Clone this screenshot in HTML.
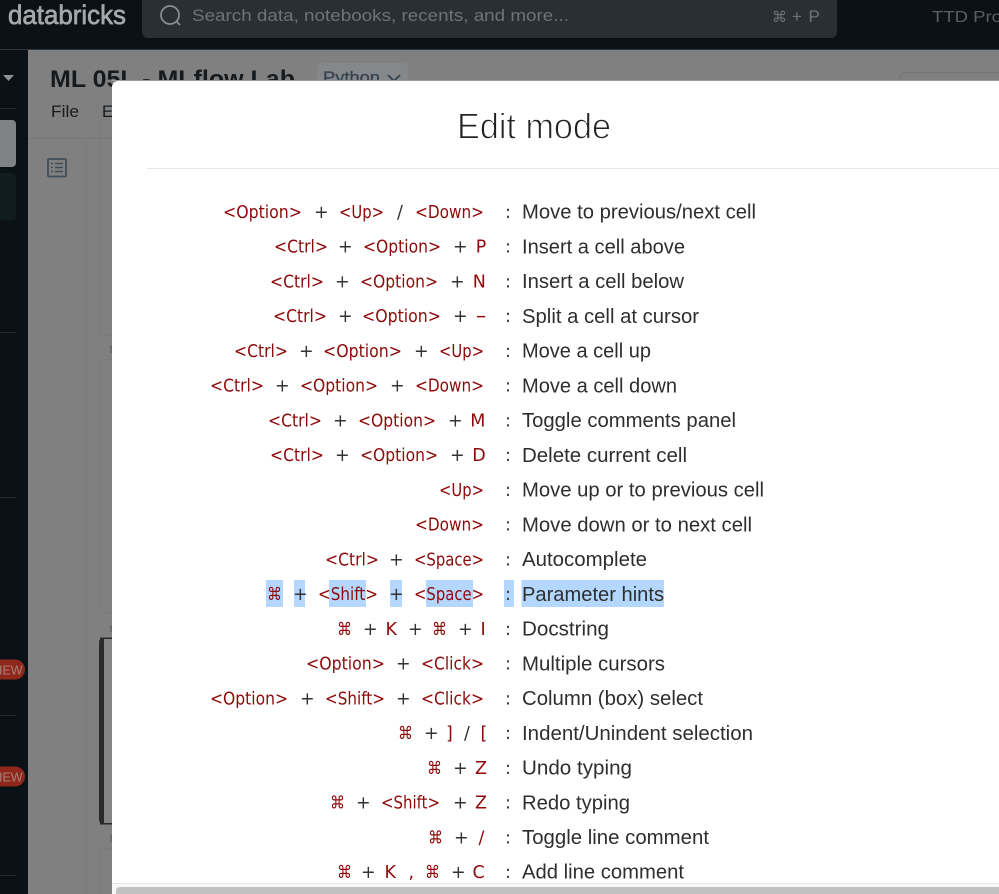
<!DOCTYPE html>
<html><head><meta charset="utf-8"><style>
html,body{margin:0;padding:0;width:999px;height:894px;overflow:hidden;background:#808080}
svg{display:block;position:absolute;left:0;top:0;filter:blur(.35px)}
text{white-space:pre}
.k{font:17.5px "DejaVu Sans",sans-serif;fill:#8e0a0a}
.p{font:17.5px "DejaVu Sans",sans-serif;fill:#333}
.d{font:20px "Liberation Sans",sans-serif;fill:#2e2e2e}
.ds{transform:translateY(.7px)}
</style></head><body>
<svg width="999" height="894" viewBox="0 0 999 894" xmlns="http://www.w3.org/2000/svg">
<!-- page -->
<rect width="999" height="894" fill="#808080"/>
<rect x="0" y="0" width="999" height="50" fill="#0a1217"/>
<rect x="0" y="49" width="999" height="1" fill="#30363a"/>
<rect x="0" y="50" width="28" height="844" fill="#0a1217"/>
<text x="8" y="24" textLength="118" lengthAdjust="spacingAndGlyphs" style="font:400 27px 'Liberation Sans',sans-serif;fill:#a5a7a8;stroke:#a5a7a8;stroke-width:.7px">databricks</text>
<path d="M142 0H837V32a6 6 0 0 1-6 6H148a6 6 0 0 1-6-6Z" fill="#2a2f33"/>
<circle cx="170" cy="15" r="9" fill="none" stroke="#8c8f91" stroke-width="1.7"/>
<path d="M176.500 21.500L180 25" stroke="#8c8f91" stroke-width="1.7"/>
<text x="192" y="21" textLength="377" lengthAdjust="spacingAndGlyphs" style="font:16.500px 'Liberation Sans',sans-serif;fill:#6f7375">Search data, notebooks, recents, and more...</text>
<text x="772" y="22" style="font:15px 'DejaVu Sans',sans-serif;fill:#6f7375">⌘</text>
<text x="792" y="22" style="font:17px 'Liberation Sans',sans-serif;fill:#6f7375">+</text>
<text x="808.500" y="22" style="font:17px 'Liberation Sans',sans-serif;fill:#6f7375">P</text>
<text x="932" y="22" textLength="70" lengthAdjust="spacingAndGlyphs" style="font:16px 'Liberation Sans',sans-serif;fill:#5a5e60">TTD Pro</text>
<!-- sidebar -->
<path d="M3 75H14L8.500 81Z" fill="#8f9193"/>
<rect x="0" y="108" width="16" height="1" fill="#22292d"/>
<path d="M0 120H12a4 4 0 0 1 4 4V163a4 4 0 0 1-4 4H0Z" fill="#808283"/>
<path d="M0 173H12a4 4 0 0 1 4 4V216a4 4 0 0 1-4 4H0Z" fill="#111c21"/>
<rect x="0" y="332" width="16" height="1" fill="#22292d"/>
<rect x="0" y="497" width="16" height="1" fill="#22292d"/>
<rect x="0" y="715" width="16" height="1" fill="#22292d"/>
<rect x="0" y="875" width="16" height="1" fill="#22292d"/>
<path d="M0 659.500H15a10 10 0 0 1 0 20H0Z" fill="#8f281b"/>
<path d="M0 766.500H15a10 10 0 0 1 0 20H0Z" fill="#8f281b"/>
<text x="-1" y="674.500" style="font:12.500px 'Liberation Sans',sans-serif;fill:#a8807b">IEW</text>
<text x="-1" y="781.500" style="font:12.500px 'Liberation Sans',sans-serif;fill:#a8807b">IEW</text>
<!-- notebook header -->
<text x="50" y="87" textLength="245" lengthAdjust="spacingAndGlyphs" style="font:700 24px 'Liberation Sans',sans-serif;fill:#161a1d">ML 05L - MLflow Lab</text>
<rect x="317" y="63" width="91" height="30" rx="5" fill="#84888a"/>
<text x="323" y="83" textLength="57" lengthAdjust="spacingAndGlyphs" style="font:16.500px 'Liberation Sans',sans-serif;fill:#34414f;stroke:#34414f;stroke-width:.25px">Python</text>
<path d="M388 75L394 81L400 75" fill="none" stroke="#34414f" stroke-width="1.800"/>
<rect x="899.500" y="72.500" width="110" height="30" rx="5" fill="none" stroke="#6f767c"/>
<text x="51" y="117" textLength="28" lengthAdjust="spacingAndGlyphs" style="font:16.500px 'Liberation Sans',sans-serif;fill:#161a1d">File</text>
<text x="102" y="117" style="font:16.500px 'Liberation Sans',sans-serif;fill:#161a1d">E</text>
<rect x="28" y="138" width="90" height="1" fill="#727a80"/>
<!-- outline icon -->
<rect x="48" y="159" width="18" height="17.500" rx="1" fill="none" stroke="#414d59" stroke-width="1.800"/>
<path d="M51 163.500h2M55 163.500h8M51 167.500h2M55 167.500h8M51 171.500h2M55 171.500h8" stroke="#414d59" stroke-width="1.500"/>
<!-- cells -->
<rect x="85.500" y="139" width="1" height="755" fill="#7a7a7a"/>
<rect x="99.500" y="120" width="30" height="215" rx="4" fill="none" stroke="#7a7a7a"/>
<rect x="99.500" y="360" width="30" height="253" rx="4" fill="none" stroke="#7a7a7a"/>
<rect x="99" y="638" width="30" height="186" rx="4" fill="#848484"/>
<path d="M104 638h-1a4 4 0 0 0-4 4V820a4 4 0 0 0 4 4h1Z" fill="#2a2a2a"/>
<rect x="100" y="637.500" width="14" height="1.500" fill="#2a2a2a"/>
<rect x="100" y="823" width="14" height="1.500" fill="#2a2a2a"/>
<rect x="99.500" y="849" width="30" height="60" rx="4" fill="none" stroke="#7a7a7a"/>
<rect x="110" y="345" width="2" height="8" fill="#6c6c6c"/>
<rect x="110" y="625" width="2" height="7" fill="#6c6c6c"/>
<rect x="110" y="835" width="2" height="7" fill="#6c6c6c"/>
<!-- modal -->
<path d="M118 81H999V894H112V87a6 6 0 0 1 6-6Z" fill="#fff"/>
<rect x="112" y="80" width="887" height="1" fill="#9b9b9b"/>
<text x="457" y="138.500" textLength="154" lengthAdjust="spacingAndGlyphs" style="font:36px 'Liberation Sans',sans-serif;fill:#222;stroke:#fff;stroke-width:1px">Edit mode</text>
<rect x="147" y="168" width="852" height="1" fill="#e6e6e6"/>
<!-- selection -->
<g fill="#b3d7ff">
<rect x="266" y="580" width="17" height="27"/><rect x="294" y="580" width="11" height="27"/><rect x="329" y="580" width="37" height="27"/><rect x="390" y="580" width="12" height="27"/><rect x="426" y="580" width="47" height="27"/><rect x="504" y="580" width="10" height="27"/><rect x="521.500" y="580" width="142.500" height="27"/>
</g>
<!-- colons -->
<g>
<text class="p" x="505" y="218">:</text><text class="p" x="505" y="252.700">:</text><text class="p" x="505" y="287.500">:</text><text class="p" x="505" y="322.200">:</text><text class="p" x="505" y="357">:</text><text class="p" x="505" y="391.700">:</text><text class="p" x="505" y="426.400">:</text><text class="p" x="505" y="461.200">:</text><text class="p" x="505" y="495.900">:</text><text class="p" x="505" y="530.700">:</text><text class="p" x="505" y="565.400">:</text><text class="p" x="505" y="600.100">:</text><text class="p" x="505" y="634.900">:</text><text class="p" x="505" y="669.600">:</text><text class="p" x="505" y="704.400">:</text><text class="p" x="505" y="739.100">:</text><text class="p" x="505" y="773.800">:</text><text class="p" x="505" y="808.600">:</text><text class="p" x="505" y="843.300">:</text><text class="p" x="505" y="878">:</text>
</g>
<!-- descriptions -->
<g class="ds">
<text class="d" x="522" y="218" textLength="234" lengthAdjust="spacingAndGlyphs">Move to previous/next cell</text>
<text class="d" x="522" y="252.700" textLength="163" lengthAdjust="spacingAndGlyphs">Insert a cell above</text>
<text class="d" x="522" y="287.500" textLength="162" lengthAdjust="spacingAndGlyphs">Insert a cell below</text>
<text class="d" x="522" y="322.200" textLength="177" lengthAdjust="spacingAndGlyphs">Split a cell at cursor</text>
<text class="d" x="522" y="357" textLength="129" lengthAdjust="spacingAndGlyphs">Move a cell up</text>
<text class="d" x="522" y="391.700" textLength="155" lengthAdjust="spacingAndGlyphs">Move a cell down</text>
<text class="d" x="522" y="426.400" textLength="214" lengthAdjust="spacingAndGlyphs">Toggle comments panel</text>
<text class="d" x="522" y="461.200" textLength="165" lengthAdjust="spacingAndGlyphs">Delete current cell</text>
<text class="d" x="522" y="495.900" textLength="242" lengthAdjust="spacingAndGlyphs">Move up or to previous cell</text>
<text class="d" x="522" y="530.700" textLength="230" lengthAdjust="spacingAndGlyphs">Move down or to next cell</text>
<text class="d" x="522" y="565.400" textLength="125" lengthAdjust="spacingAndGlyphs">Autocomplete</text>
<text class="d" x="522" y="600.100" textLength="142" lengthAdjust="spacingAndGlyphs">Parameter hints</text>
<text class="d" x="522" y="634.900" textLength="87" lengthAdjust="spacingAndGlyphs">Docstring</text>
<text class="d" x="522" y="669.600" textLength="143" lengthAdjust="spacingAndGlyphs">Multiple cursors</text>
<text class="d" x="522" y="704.400" textLength="181" lengthAdjust="spacingAndGlyphs">Column (box) select</text>
<text class="d" x="522" y="739.100" textLength="231" lengthAdjust="spacingAndGlyphs">Indent/Unindent selection</text>
<text class="d" x="522" y="773.800" textLength="110" lengthAdjust="spacingAndGlyphs">Undo typing</text>
<text class="d" x="522" y="808.600" textLength="108" lengthAdjust="spacingAndGlyphs">Redo typing</text>
<text class="d" x="522" y="843.300" textLength="187" lengthAdjust="spacingAndGlyphs">Toggle line comment</text>
<text class="d" x="522" y="878" textLength="162" lengthAdjust="spacingAndGlyphs">Add line comment</text>
</g>
<!-- keys -->
<text class="k" x="223" y="218" textLength="79" lengthAdjust="spacingAndGlyphs">&lt;Option&gt;</text><text class="p" x="314" y="218">+</text><text class="k" x="339" y="218" textLength="45" lengthAdjust="spacingAndGlyphs">&lt;Up&gt;</text><text class="p" x="397" y="218">/</text><text class="k" x="415" y="218" textLength="69" lengthAdjust="spacingAndGlyphs">&lt;Down&gt;</text>

<text class="k" x="274" y="252.700" textLength="54" lengthAdjust="spacingAndGlyphs">&lt;Ctrl&gt;</text><text class="p" x="338" y="252.700">+</text><text class="k" x="363" y="252.700" textLength="78" lengthAdjust="spacingAndGlyphs">&lt;Option&gt;</text><text class="p" x="453" y="252.700">+</text><text class="k" x="475.700" y="252.700">P</text>

<text class="k" x="270" y="287.500" textLength="54" lengthAdjust="spacingAndGlyphs">&lt;Ctrl&gt;</text><text class="p" x="335" y="287.500">+</text><text class="k" x="360" y="287.500" textLength="78" lengthAdjust="spacingAndGlyphs">&lt;Option&gt;</text><text class="p" x="450" y="287.500">+</text><text class="k" x="472.700" y="287.500">N</text>

<text class="k" x="273" y="322.200" textLength="54" lengthAdjust="spacingAndGlyphs">&lt;Ctrl&gt;</text><text class="p" x="338" y="322.200">+</text><text class="k" x="362" y="322.200" textLength="79" lengthAdjust="spacingAndGlyphs">&lt;Option&gt;</text><text class="p" x="453" y="322.200">+</text><text class="k" x="475.500" y="322.200" textLength="11" lengthAdjust="spacingAndGlyphs">−</text>

<text class="k" x="234" y="357" textLength="54" lengthAdjust="spacingAndGlyphs">&lt;Ctrl&gt;</text><text class="p" x="299" y="357">+</text><text class="k" x="323" y="357" textLength="79" lengthAdjust="spacingAndGlyphs">&lt;Option&gt;</text><text class="p" x="414" y="357">+</text><text class="k" x="439" y="357" textLength="45" lengthAdjust="spacingAndGlyphs">&lt;Up&gt;</text>

<text class="k" x="210" y="391.700" textLength="54" lengthAdjust="spacingAndGlyphs">&lt;Ctrl&gt;</text><text class="p" x="275" y="391.700">+</text><text class="k" x="300" y="391.700" textLength="78" lengthAdjust="spacingAndGlyphs">&lt;Option&gt;</text><text class="p" x="390" y="391.700">+</text><text class="k" x="415" y="391.700" textLength="69" lengthAdjust="spacingAndGlyphs">&lt;Down&gt;</text>

<text class="k" x="268" y="426.400" textLength="54" lengthAdjust="spacingAndGlyphs">&lt;Ctrl&gt;</text><text class="p" x="333" y="426.400">+</text><text class="k" x="358" y="426.400" textLength="78" lengthAdjust="spacingAndGlyphs">&lt;Option&gt;</text><text class="p" x="448" y="426.400">+</text><text class="k" x="470.300" y="426.400">M</text>

<text class="k" x="270" y="461.200" textLength="54" lengthAdjust="spacingAndGlyphs">&lt;Ctrl&gt;</text><text class="p" x="335" y="461.200">+</text><text class="k" x="360" y="461.200" textLength="78" lengthAdjust="spacingAndGlyphs">&lt;Option&gt;</text><text class="p" x="450" y="461.200">+</text><text class="k" x="472.300" y="461.200">D</text>

<text class="k" x="439" y="495.900" textLength="45" lengthAdjust="spacingAndGlyphs">&lt;Up&gt;</text>

<text class="k" x="415" y="530.700" textLength="69" lengthAdjust="spacingAndGlyphs">&lt;Down&gt;</text>

<text class="k" x="325" y="565.400" textLength="54" lengthAdjust="spacingAndGlyphs">&lt;Ctrl&gt;</text><text class="p" x="389" y="565.400">+</text><text class="k" x="414" y="565.400" textLength="70" lengthAdjust="spacingAndGlyphs">&lt;Space&gt;</text>

<text class="k" x="267" y="600.100" textLength="15" lengthAdjust="spacingAndGlyphs">⌘</text><text class="p" x="293" y="600.100">+</text><text class="k" x="318" y="600.100" textLength="60" lengthAdjust="spacingAndGlyphs">&lt;Shift&gt;</text><text class="p" x="389" y="600.100">+</text><text class="k" x="414" y="600.100" textLength="70" lengthAdjust="spacingAndGlyphs">&lt;Space&gt;</text>

<text class="k" x="337" y="634.900" textLength="15" lengthAdjust="spacingAndGlyphs">⌘</text><text class="p" x="363" y="634.900">+</text><text class="k" x="385.500" y="634.900">K</text><text class="p" x="408" y="634.900">+</text><text class="k" x="432" y="634.900" textLength="15" lengthAdjust="spacingAndGlyphs">⌘</text><text class="p" x="458" y="634.900">+</text><text class="k" x="480.500" y="634.900">I</text>

<text class="k" x="306" y="669.600" textLength="79" lengthAdjust="spacingAndGlyphs">&lt;Option&gt;</text><text class="p" x="396" y="669.600">+</text><text class="k" x="421" y="669.600" textLength="63" lengthAdjust="spacingAndGlyphs">&lt;Click&gt;</text>

<text class="k" x="210" y="704.400" textLength="78" lengthAdjust="spacingAndGlyphs">&lt;Option&gt;</text><text class="p" x="300" y="704.400">+</text><text class="k" x="325" y="704.400" textLength="60" lengthAdjust="spacingAndGlyphs">&lt;Shift&gt;</text><text class="p" x="396" y="704.400">+</text><text class="k" x="421" y="704.400" textLength="63" lengthAdjust="spacingAndGlyphs">&lt;Click&gt;</text>

<text class="k" x="398" y="739.100" textLength="15" lengthAdjust="spacingAndGlyphs">⌘</text><text class="p" x="424" y="739.100">+</text><text class="k" x="446" y="739.100">]</text><text class="p" x="464" y="739.100">/</text><text class="k" x="480.500" y="739.100">[</text>

<text class="k" x="427" y="773.800" textLength="15" lengthAdjust="spacingAndGlyphs">⌘</text><text class="p" x="453" y="773.800">+</text><text class="k" x="475" y="773.800">Z</text>

<text class="k" x="330" y="808.600" textLength="15" lengthAdjust="spacingAndGlyphs">⌘</text><text class="p" x="356" y="808.600">+</text><text class="k" x="381" y="808.600" textLength="59" lengthAdjust="spacingAndGlyphs">&lt;Shift&gt;</text><text class="p" x="453" y="808.600">+</text><text class="k" x="475" y="808.600">Z</text>

<text class="k" x="428" y="843.300" textLength="15" lengthAdjust="spacingAndGlyphs">⌘</text><text class="p" x="454" y="843.300">+</text><text class="k" x="478.500" y="843.300">/</text>

<text class="k" x="337" y="878" textLength="15" lengthAdjust="spacingAndGlyphs">⌘</text><text class="p" x="361" y="878">+</text><text class="k" x="384.500" y="878">K</text><text class="k" x="408.500" y="878">,</text><text class="k" x="425" y="878" textLength="15" lengthAdjust="spacingAndGlyphs">⌘</text><text class="p" x="451" y="878">+</text><text class="k" x="472.500" y="878">C</text>
<!-- scrollbar -->
<rect x="112" y="883" width="887" height="11" fill="#f7f7f7"/>
<rect x="112" y="883" width="887" height="1" fill="#e8e8e8"/>
<path d="M120 887H999V894H116V891a4 4 0 0 1 4-4Z" fill="#c1c1c1"/>
</svg>
</body></html>
